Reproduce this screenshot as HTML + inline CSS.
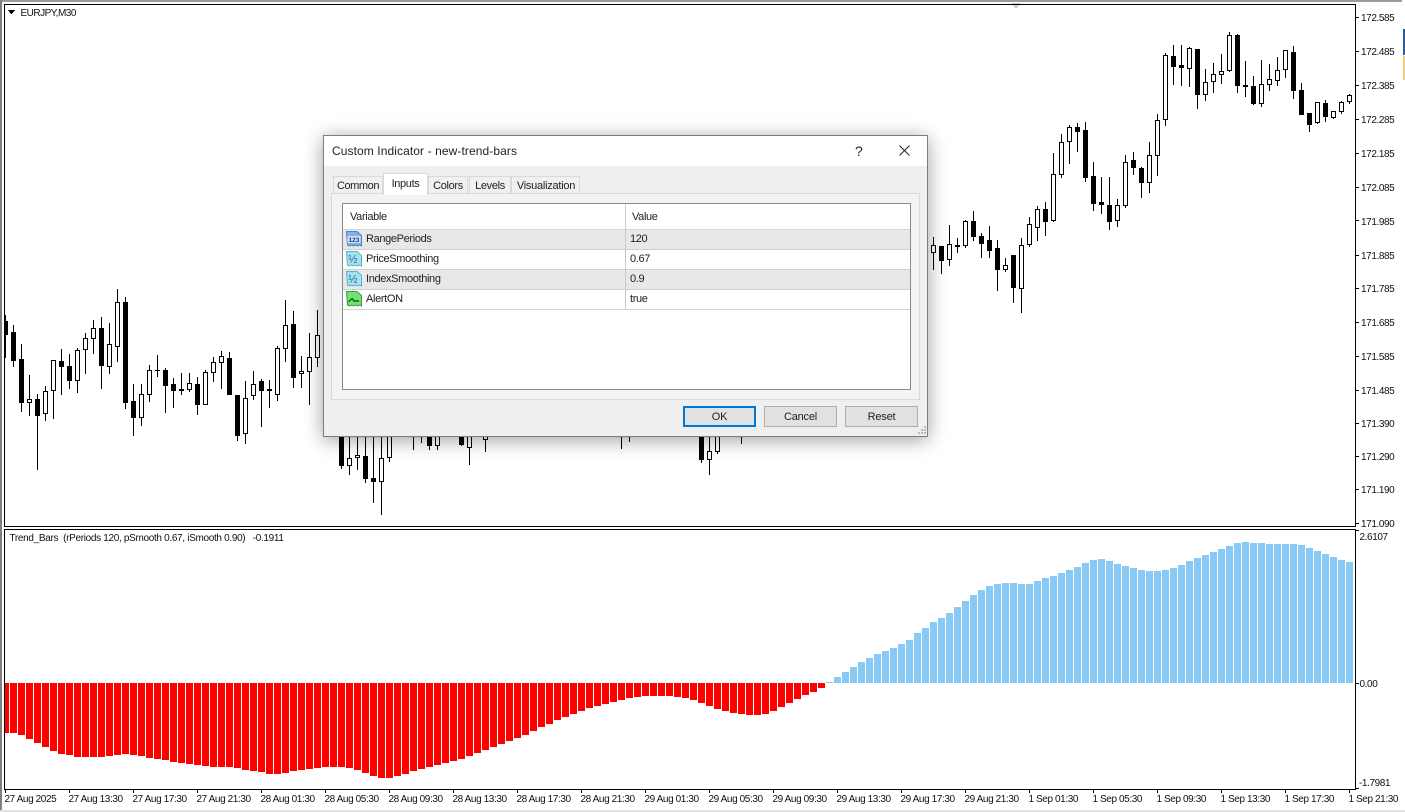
<!DOCTYPE html>
<html lang="en">
<head>
<meta charset="utf-8">
<title>EURJPY,M30 - Custom Indicator</title>
<style>
html,body{margin:0;padding:0;width:1405px;height:812px;overflow:hidden;background:#fff;font-family:"Liberation Sans",sans-serif;color:#1a1a1a}
svg.chart{position:absolute;left:0;top:0}
svg.chart text{font-family:"Liberation Sans",sans-serif;font-size:10px;letter-spacing:-.4px;fill:#111}
.dlg{position:absolute;left:323px;top:135px;width:603px;height:300px;background:#efefef;border:1px solid #7d7d7d;box-shadow:0 3px 18px rgba(0,0,0,.38)}
.dlg>*{position:absolute}
.tb{left:0;top:0;width:603px;height:30px;background:#fff}
.ttl{left:8px;top:8px;font-size:12px;letter-spacing:.09px;line-height:14px;white-space:nowrap;color:#222}
.q{left:531px;top:7px;font-size:14px;line-height:16px;color:#222}
.tab{top:40px;height:18px;background:#f0f0f0;border:1px solid #d9d9d9;border-bottom:0;box-sizing:border-box;font-size:11px;letter-spacing:-.35px;line-height:18px;text-align:center;color:#222;z-index:1}
.tab.on{top:37px;height:22px;background:#fff;line-height:21px;z-index:3;border-color:#d9d9d9}
.panel{left:7px;top:57px;width:589px;height:207px;box-sizing:border-box;background:#f3f3f3;border:1px solid #d9d9d9;z-index:2}
.list{left:18px;top:67px;width:569px;height:187px;box-sizing:border-box;background:#fff;border:1px solid #8a8a8a;z-index:4}
.list>*{position:absolute}
.hd{left:0;top:0;width:567px;height:25px;border-bottom:1px solid #d6d6d6;box-sizing:content-box}
.vd{left:282px;top:0;width:1px;height:104px;background:#d0d0d0}
.row{left:0;width:567px;height:19px;border-bottom:1px solid #d0d0d0}
.row.g{background:#e8e8e8}
.t{font-size:11px;letter-spacing:-.35px;line-height:13px;white-space:nowrap;color:#222}
.ic{left:3px;width:16px;height:16px}
.btn{top:270px;width:73px;height:21px;box-sizing:border-box;background:#e1e1e1;border:1px solid #adadad;font-size:11px;letter-spacing:-.2px;line-height:21px;text-align:center;color:#222}
.btn.ok{border:2px solid #0078d7;line-height:19px}
.grip{left:593px;top:289px;width:10px;height:10px}
</style>
</head>
<body>
<svg class="chart" width="1405" height="812" viewBox="0 0 1405 812" shape-rendering="crispEdges">
<!-- window frame -->
<rect x="0" y="0" width="1402" height="2" fill="#9a9a9a"/>
<rect x="0" y="0" width="2" height="812" fill="#808080"/>
<rect x="0" y="810" width="1405" height="2" fill="#e2e2e2"/>
<rect x="1403" y="29" width="2" height="26" fill="#2f5c98"/>
<rect x="1403" y="56" width="2" height="24" fill="#e8cf84"/>
<path d="M1011 3h10l-5 6z" fill="#c9c9c9"/>
<!-- indicator bars -->
<path fill="#ff0000" d="M5 683h4V733h-4zM10 683h7V733h-7zM18 683h7V735h-7zM26 683h7V739h-7zM34 683h7V743h-7zM42 683h7V747h-7zM50 683h7V751h-7zM58 683h7V754h-7zM66 683h7V755h-7zM74 683h7V757h-7zM82 683h7V757h-7zM90 683h7V757h-7zM98 683h7V757h-7zM106 683h7V756h-7zM114 683h7V755h-7zM122 683h7V754h-7zM130 683h7V755h-7zM138 683h7V756h-7zM146 683h7V758h-7zM154 683h7V759h-7zM162 683h7V760h-7zM170 683h7V762h-7zM178 683h7V763h-7zM186 683h7V764h-7zM194 683h7V765h-7zM202 683h7V766h-7zM210 683h7V767h-7zM218 683h7V767h-7zM226 683h7V767h-7zM234 683h7V768h-7zM242 683h7V770h-7zM250 683h7V771h-7zM258 683h7V772h-7zM266 683h7V774h-7zM274 683h7V774h-7zM282 683h7V773h-7zM290 683h7V771h-7zM298 683h7V770h-7zM306 683h7V769h-7zM314 683h7V768h-7zM322 683h7V767h-7zM330 683h7V767h-7zM338 683h7V767h-7zM346 683h7V768h-7zM354 683h7V770h-7zM362 683h7V773h-7zM370 683h7V776h-7zM378 683h7V778h-7zM386 683h7V778h-7zM394 683h7V776h-7zM402 683h7V774h-7zM410 683h7V771h-7zM418 683h7V769h-7zM426 683h7V767h-7zM434 683h7V765h-7zM442 683h7V763h-7zM450 683h7V761h-7zM458 683h7V759h-7zM466 683h7V756h-7zM474 683h7V753h-7zM482 683h7V750h-7zM490 683h7V747h-7zM498 683h7V744h-7zM506 683h7V741h-7zM514 683h7V738h-7zM522 683h7V735h-7zM530 683h7V731h-7zM538 683h7V727h-7zM546 683h7V724h-7zM554 683h7V720h-7zM562 683h7V717h-7zM570 683h7V714h-7zM578 683h7V711h-7zM586 683h7V708h-7zM594 683h7V706h-7zM602 683h7V704h-7zM610 683h7V702h-7zM618 683h7V700h-7zM626 683h7V698h-7zM634 683h7V697h-7zM642 683h7V696h-7zM650 683h7V696h-7zM658 683h7V696h-7zM666 683h7V696h-7zM674 683h7V697h-7zM682 683h7V698h-7zM690 683h7V700h-7zM698 683h7V703h-7zM706 683h7V706h-7zM714 683h7V709h-7zM722 683h7V711h-7zM730 683h7V713h-7zM738 683h7V714h-7zM746 683h7V715h-7zM754 683h7V715h-7zM762 683h7V714h-7zM770 683h7V711h-7zM778 683h7V707h-7zM786 683h7V703h-7zM794 683h7V699h-7zM802 683h7V695h-7zM810 683h7V692h-7zM818 683h7V688h-7z"/>
<path fill="#89c9f6" d="M826 682h7V683h-7zM834 677h7V683h-7zM842 672h7V683h-7zM850 667h7V683h-7zM858 662h7V683h-7zM866 658h7V683h-7zM874 654h7V683h-7zM882 651h7V683h-7zM890 648h7V683h-7zM898 644h7V683h-7zM906 640h7V683h-7zM914 633h7V683h-7zM922 628h7V683h-7zM930 622h7V683h-7zM938 618h7V683h-7zM946 613h7V683h-7zM954 607h7V683h-7zM962 601h7V683h-7zM970 595h7V683h-7zM978 590h7V683h-7zM986 586h7V683h-7zM994 584h7V683h-7zM1002 583h7V683h-7zM1010 583h7V683h-7zM1018 584h7V683h-7zM1026 584h7V683h-7zM1034 581h7V683h-7zM1042 578h7V683h-7zM1050 576h7V683h-7zM1058 573h7V683h-7zM1066 570h7V683h-7zM1074 567h7V683h-7zM1082 563h7V683h-7zM1090 560h7V683h-7zM1098 559h7V683h-7zM1106 561h7V683h-7zM1114 564h7V683h-7zM1122 566h7V683h-7zM1130 568h7V683h-7zM1138 570h7V683h-7zM1146 571h7V683h-7zM1154 571h7V683h-7zM1162 570h7V683h-7zM1170 568h7V683h-7zM1178 565h7V683h-7zM1186 561h7V683h-7zM1194 558h7V683h-7zM1202 555h7V683h-7zM1210 552h7V683h-7zM1218 549h7V683h-7zM1226 546h7V683h-7zM1234 543h7V683h-7zM1242 542h7V683h-7zM1250 543h7V683h-7zM1258 543h7V683h-7zM1266 544h7V683h-7zM1274 544h7V683h-7zM1282 544h7V683h-7zM1290 544h7V683h-7zM1298 545h7V683h-7zM1306 548h7V683h-7zM1314 551h7V683h-7zM1322 554h7V683h-7zM1330 557h7V683h-7zM1338 560h7V683h-7zM1346 562h7V683h-7z"/>
<!-- candle wicks -->
<path fill="none" stroke="#000" stroke-width="1" d="M5.5 315V358M13.5 325V367M21.5 344V412M29.5 375V416M37.5 394V470M45.5 386V421M53.5 360V419M61.5 349V395M69.5 354V389M77.5 348V393M85.5 333V374M93.5 320V354M101.5 317V389M109.5 323V374M117.5 289V362M125.5 297V409M133.5 384V436M141.5 384V426M149.5 365V402M157.5 355V377M165.5 368V413M173.5 378V408M181.5 373V395M189.5 373V392M197.5 377V415M205.5 370V405M213.5 357V382M221.5 351V389M229.5 352V395M237.5 395V441M245.5 381V444M253.5 371V400M261.5 379V427M269.5 380V408M277.5 346V401M285.5 300V362M293.5 311V388M301.5 356V388M309.5 333V405M317.5 310V367M341.5 430V469M349.5 430V475M357.5 430V470M365.5 430V483M373.5 430V503M381.5 430V515M389.5 430V462M413.5 430V450M421.5 430V443M429.5 430V450M437.5 430V450M461.5 430V446M469.5 430V465M485.5 430V452M621.5 430V449M629.5 430V442M701.5 430V463M709.5 430V475M717.5 430V454M741.5 430V444M933.5 237V270M941.5 246V274M949.5 225V266M957.5 238V253M965.5 220V248M973.5 211V241M981.5 233V258M989.5 226V258M997.5 240V291M1005.5 258V272M1013.5 255V303M1021.5 238V313M1029.5 217V247M1037.5 206V241M1045.5 202V236M1053.5 153V222M1061.5 134V178M1069.5 125V164M1077.5 123V152M1085.5 122V182M1093.5 162V211M1101.5 177V214M1109.5 177V230M1117.5 199V227M1125.5 155V208M1133.5 152V175M1141.5 167V198M1149.5 142V193M1157.5 114V176M1165.5 53V126M1173.5 45V85M1181.5 45V86M1189.5 47V87M1197.5 49V109M1205.5 69V101M1213.5 63V93M1221.5 54V84M1229.5 32V72M1237.5 34V93M1245.5 61V97M1253.5 76V105M1261.5 60V107M1269.5 64V91M1277.5 57V86M1285.5 50V78M1293.5 46V99M1301.5 83V115M1309.5 113V132M1317.5 102V124M1325.5 100V122M1333.5 111V119M1341.5 101V114M1349.5 94V104"/>
<!-- black bodies -->
<path fill="#000" d="M5 321h3v14h-3zM11 332h5v29h-5zM19 359h5v44h-5zM35 399h5v17h-5zM59 361h5v6h-5zM67 366h5v15h-5zM99 328h5v38h-5zM123 302h5v101h-5zM131 401h5v17h-5zM155 370h5v1h-5zM163 370h5v16h-5zM171 384h5v7h-5zM179 389h5v2h-5zM195 384h5v21h-5zM227 358h5v37h-5zM235 395h5v41h-5zM259 381h5v10h-5zM267 389h5v2h-5zM291 324h5v54h-5zM339 430h5v36h-5zM363 456h5v23h-5zM371 478h5v4h-5zM427 430h5v16h-5zM459 430h5v15h-5zM699 430h5v30h-5zM939 246h5v15h-5zM955 245h5v2h-5zM971 221h5v16h-5zM979 236h5v8h-5zM987 240h5v11h-5zM995 248h5v22h-5zM1011 255h5v33h-5zM1043 209h5v13h-5zM1075 127h5v5h-5zM1083 130h5v48h-5zM1091 176h5v28h-5zM1099 202h5v3h-5zM1107 205h5v17h-5zM1131 160h5v8h-5zM1139 168h5v15h-5zM1171 56h5v11h-5zM1179 65h5v3h-5zM1195 49h5v46h-5zM1235 35h5v51h-5zM1243 85h5v2h-5zM1251 86h5v18h-5zM1291 52h5v39h-5zM1299 90h5v25h-5zM1307 113h5v12h-5zM1323 103h5v14h-5z"/>
<!-- white bodies -->
<path fill="#fff" stroke="#000" stroke-width="1" d="M27.5 399.5h4v3h-4zM43.5 391.5h4v22h-4zM51.5 360.5h4v30h-4zM75.5 350.5h4v30h-4zM83.5 338.5h4v11h-4zM91.5 328.5h4v10h-4zM107.5 344.5h4v22h-4zM115.5 302.5h4v44h-4zM139.5 394.5h4v23h-4zM147.5 370.5h4v24h-4zM187.5 383.5h4v6h-4zM203.5 372.5h4v32h-4zM211.5 362.5h4v10h-4zM219.5 356.5h4v6h-4zM243.5 398.5h4v35h-4zM251.5 384.5h4v11h-4zM275.5 348.5h4v46h-4zM283.5 325.5h4v23h-4zM299.5 371.5h4v2h-4zM307.5 357.5h4v14h-4zM315.5 335.5h4v22h-4zM347.5 458.5h4v7h-4zM355.5 455.5h4v2h-4zM379.5 458.5h4v23h-4zM387.5 430.5h4v27h-4zM435.5 430.5h4v15h-4zM467.5 430.5h4v17h-4zM483.5 430.5h4v9h-4zM707.5 451.5h4v8h-4zM715.5 430.5h4v21h-4zM931.5 245.5h4v7h-4zM947.5 244.5h4v15h-4zM963.5 221.5h4v24h-4zM1003.5 265.5h4v4h-4zM1019.5 245.5h4v43h-4zM1027.5 224.5h4v20h-4zM1035.5 209.5h4v18h-4zM1051.5 174.5h4v46h-4zM1059.5 142.5h4v32h-4zM1067.5 127.5h4v14h-4zM1115.5 205.5h4v15h-4zM1123.5 162.5h4v43h-4zM1147.5 155.5h4v27h-4zM1155.5 120.5h4v35h-4zM1163.5 55.5h4v64h-4zM1187.5 48.5h4v20h-4zM1203.5 82.5h4v12h-4zM1211.5 74.5h4v7h-4zM1219.5 71.5h4v3h-4zM1227.5 35.5h4v35h-4zM1259.5 84.5h4v19h-4zM1267.5 79.5h4v5h-4zM1275.5 70.5h4v10h-4zM1283.5 50.5h4v19h-4zM1315.5 102.5h4v20h-4zM1331.5 111.5h4v6h-4zM1339.5 102.5h4v9h-4zM1347.5 95.5h4v6h-4z"/>
<!-- chart frames -->
<g fill="#000">
<rect x="4" y="4" width="1352" height="1"/>
<rect x="4" y="4" width="1" height="523"/>
<rect x="4" y="526" width="1352" height="1"/>
<rect x="1355" y="4" width="1" height="523"/>
<rect x="4" y="529" width="1352" height="1"/>
<rect x="4" y="529" width="1" height="261"/>
<rect x="4" y="789" width="1352" height="1"/>
<rect x="1355" y="529" width="1" height="261"/>
<!-- price ticks -->
<path d="M1356 17h3v1h-3zM1356 51h3v1h-3zM1356 85h3v1h-3zM1356 119h3v1h-3zM1356 153h3v1h-3zM1356 187h3v1h-3zM1356 220h3v1h-3zM1356 255h3v1h-3zM1356 288h3v1h-3zM1356 322h3v1h-3zM1356 356h3v1h-3zM1356 390h3v1h-3zM1356 423h3v1h-3zM1356 456h3v1h-3zM1356 489h3v1h-3zM1356 523h3v1h-3zM1356 530h3v1h-3zM1356 683h3v1h-3zM1356 788h3v1h-3z"/>
<!-- time ticks -->
<path d="M5 790h1v3h-1zM69 790h1v3h-1zM133 790h1v3h-1zM197 790h1v3h-1zM261 790h1v3h-1zM325 790h1v3h-1zM389 790h1v3h-1zM453 790h1v3h-1zM517 790h1v3h-1zM581 790h1v3h-1zM645 790h1v3h-1zM709 790h1v3h-1zM773 790h1v3h-1zM837 790h1v3h-1zM901 790h1v3h-1zM965 790h1v3h-1zM1029 790h1v3h-1zM1093 790h1v3h-1zM1157 790h1v3h-1zM1221 790h1v3h-1zM1285 790h1v3h-1zM1349 790h1v3h-1z"/>
<path d="M8 10h7l-3.500 4.500z"/>
</g>
<g shape-rendering="auto">
<text x="20.500" y="16" style="letter-spacing:-.5px">EURJPY,M30</text>
<text x="9.500" y="541" xml:space="preserve" style="letter-spacing:-.32px">Trend_Bars  (rPeriods 120, pSmooth 0.67, iSmooth 0.90)   -0.1911</text>
<text x="1361" y="21">172.585</text>
<text x="1361" y="55">172.485</text>
<text x="1361" y="89">172.385</text>
<text x="1361" y="123">172.285</text>
<text x="1361" y="157">172.185</text>
<text x="1361" y="191">172.085</text>
<text x="1361" y="225">171.985</text>
<text x="1361" y="259">171.885</text>
<text x="1361" y="292">171.785</text>
<text x="1361" y="326">171.685</text>
<text x="1361" y="360">171.585</text>
<text x="1361" y="394">171.485</text>
<text x="1361" y="427">171.390</text>
<text x="1361" y="460">171.290</text>
<text x="1361" y="493">171.190</text>
<text x="1361" y="527">171.090</text>
<text x="1359.500" y="540">2.6107</text>
<text x="1359.500" y="687">0.00</text>
<text x="1359" y="786">-1.7981</text>
<text x="4.500" y="802">27 Aug 2025</text>
<text x="68.500" y="802">27 Aug 13:30</text>
<text x="132.500" y="802">27 Aug 17:30</text>
<text x="196.500" y="802">27 Aug 21:30</text>
<text x="260.500" y="802">28 Aug 01:30</text>
<text x="324.500" y="802">28 Aug 05:30</text>
<text x="388.500" y="802">28 Aug 09:30</text>
<text x="452.500" y="802">28 Aug 13:30</text>
<text x="516.500" y="802">28 Aug 17:30</text>
<text x="580.500" y="802">28 Aug 21:30</text>
<text x="644.500" y="802">29 Aug 01:30</text>
<text x="708.500" y="802">29 Aug 05:30</text>
<text x="772.500" y="802">29 Aug 09:30</text>
<text x="836.500" y="802">29 Aug 13:30</text>
<text x="900.500" y="802">29 Aug 17:30</text>
<text x="964.500" y="802">29 Aug 21:30</text>
<text x="1028.500" y="802">1 Sep 01:30</text>
<text x="1092.500" y="802">1 Sep 05:30</text>
<text x="1156.500" y="802">1 Sep 09:30</text>
<text x="1220.500" y="802">1 Sep 13:30</text>
<text x="1284.500" y="802">1 Sep 17:30</text>
<text x="1348.500" y="802">1 Sep 21:30</text>
</g>
</svg>

<div class="dlg">
  <div class="tb"></div>
  <div class="ttl">Custom Indicator - new-trend-bars</div>
  <div class="q">?</div>
  <svg style="left:575px;top:9px" width="11" height="11" viewBox="0 0 11 11"><path d="M.5.500l10 10M10.500.500l-10 10" stroke="#222" stroke-width="1" fill="none"/></svg>
  <div class="tab" style="left:9px;width:50px;letter-spacing:-.42px">Common</div>
  <div class="tab on" style="left:59px;width:45px">Inputs</div>
  <div class="tab" style="left:104px;width:40px">Colors</div>
  <div class="tab" style="left:145px;width:42px">Levels</div>
  <div class="tab" style="left:187px;width:69px;letter-spacing:-.25px;text-indent:1px">Visualization</div>
  <div class="panel"></div>
  <div class="list">
    <div class="hd"></div>
    <div class="vd"></div>
    <div class="t" style="left:7px;top:7px">Variable</div>
    <div class="t" style="left:289px;top:7px">Value</div>
    <div class="row g" style="top:26px"></div>
    <div class="row" style="top:46px"></div>
    <div class="row g" style="top:66px"></div>
    <div class="row" style="top:86px"></div>
    <div class="vd" style="top:26px;height:79px;background:#c8c8c8"></div>

    <svg class="ic" style="top:27px" viewBox="0 0 16 16"><path d="M.5.500H11l4.500 4V15l-2-1-2 1-2-1-2 1-2-1-2 1-2-1z" fill="#7fb5e6" stroke="#4a86c0"/><rect x="1.500" y="5" width="13" height="7" fill="#cfe3f7"/><text x="8" y="11" text-anchor="middle" font-family="Liberation Sans,sans-serif" font-size="6.500" font-weight="bold" fill="#12407a">123</text></svg>
    <div class="t" style="left:23px;top:29px">RangePeriods</div>
    <div class="t" style="left:287px;top:29px">120</div>

    <svg class="ic" style="top:47px" viewBox="0 0 16 16"><path d="M.5.500H11l4.500 4V15l-2-1-2 1-2-1-2 1-2-1-2 1-2-1z" fill="#a4e3ef" stroke="#56b4c8"/><text x="7" y="11.500" text-anchor="middle" font-family="Liberation Sans,sans-serif" font-size="11" fill="#1f6496">½</text></svg>
    <div class="t" style="left:23px;top:49px">PriceSmoothing</div>
    <div class="t" style="left:287px;top:49px">0.67</div>

    <svg class="ic" style="top:67px" viewBox="0 0 16 16"><path d="M.5.500H11l4.500 4V15l-2-1-2 1-2-1-2 1-2-1-2 1-2-1z" fill="#a4e3ef" stroke="#56b4c8"/><text x="7" y="11.500" text-anchor="middle" font-family="Liberation Sans,sans-serif" font-size="11" fill="#1f6496">½</text></svg>
    <div class="t" style="left:23px;top:69px">IndexSmoothing</div>
    <div class="t" style="left:287px;top:69px">0.9</div>

    <svg class="ic" style="top:87px" viewBox="0 0 16 16"><path d="M.5.500H11l4.500 4V15l-2-1-2 1-2-1-2 1-2-1-2 1-2-1z" fill="#6fe26f" stroke="#3c9a4a"/><path d="M2.500 11L6 7.500l2 2.500h5" fill="none" stroke="#0f4a18" stroke-width="1.200"/></svg>
    <div class="t" style="left:23px;top:89px">AlertON</div>
    <div class="t" style="left:287px;top:89px">true</div>
  </div>
  <div class="btn ok" style="left:359px">OK</div>
  <div class="btn" style="left:440px">Cancel</div>
  <div class="btn" style="left:521px">Reset</div>
  <svg class="grip" viewBox="0 0 10 10"><path d="M7 1h2v2H7zM4 4h2v2H4zM7 4h2v2H7zM1 7h2v2H1zM4 7h2v2H4zM7 7h2v2H7z" fill="#b8b8b8"/></svg>
</div>
</body>
</html>
